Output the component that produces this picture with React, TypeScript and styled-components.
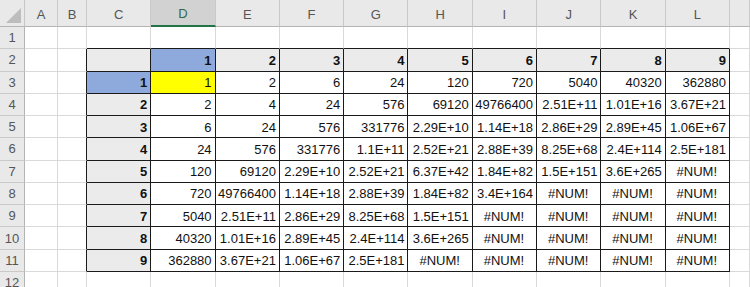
import React from 'react';
import styled, {createGlobalStyle} from 'styled-components';

const GlobalStyle = createGlobalStyle`
  html, body {
    margin: 0;
    padding: 0;
    background: #ffffff;
  }
`;

const columns = ['A', 'B', 'C', 'D', 'E', 'F', 'G', 'H', 'I', 'J', 'K', 'L', ''];
const rowCount = 12;

const N = '#NUM!';
const values: string[][] = [
    ['1', '2', '6', '24', '120', '720', '5040', '40320', '362880'],
    ['2', '4', '24', '576', '69120', '49766400', '2.51E+11', '1.01E+16', '3.67E+21'],
    ['6', '24', '576', '331776', '2.29E+10', '1.14E+18', '2.86E+29', '2.89E+45', '1.06E+67'],
    ['24', '576', '331776', '1.1E+11', '2.52E+21', '2.88E+39', '8.25E+68', '2.4E+114', '2.5E+181'],
    ['120', '69120', '2.29E+10', '2.52E+21', '6.37E+42', '1.84E+82', '1.5E+151', '3.6E+265', N],
    ['720', '49766400', '1.14E+18', '2.88E+39', '1.84E+82', '3.4E+164', N, N, N],
    ['5040', '2.51E+11', '2.86E+29', '8.25E+68', '1.5E+151', N, N, N, N],
    ['40320', '1.01E+16', '2.89E+45', '2.4E+114', '3.6E+265', N, N, N, N],
    ['362880', '3.67E+21', '1.06E+67', '2.5E+181', N, N, N, N, N],
];

// table spans C2:L11 -> column index 2..11, row 2..11
const inTable = (c: number, r: number) => c >= 2 && c <= 11 && r >= 2 && r <= 11;

type CellInfo = {text: string; fill: string; bold: boolean; center: boolean};

const cellInfo = (c: number, r: number): CellInfo => {
    const blank = {text: '', fill: '#ffffff', bold: false, center: false};
    if (!inTable(c, r)) return blank;
    const grey = '#ebebeb';
    const blue = '#8ea9db';
    if (r === 2) {
        if (c === 2) return {...blank, fill: grey};
        return {text: String(c - 2), fill: c === 3 ? blue : grey, bold: true, center: false};
    }
    if (c === 2) {
        return {text: String(r - 2), fill: r === 3 ? blue : grey, bold: true, center: false};
    }
    const text = values[r - 3][c - 3];
    const fill = c === 3 && r === 3 ? '#ffff00' : '#ffffff';
    return {text, fill, bold: false, center: text === N};
};

export default function App() {
    return (
        <>
            <GlobalStyle/>
            <Sheet>
                <Corner><Triangle/></Corner>
                {columns.map((col, i) => (
                    <ColHead key={col + i} $selected={col === 'D'}>{col}</ColHead>
                ))}
                {Array.from({length: rowCount}, (_, ri) => {
                    const r = ri + 1;
                    return (
                        <React.Fragment key={r}>
                            <RowHead>{r}</RowHead>
                            {columns.map((_, c) => {
                                const info = cellInfo(c, r);
                                const dark = inTable(c, r);
                                return (
                                    <Cell key={c}
                                          $fill={info.fill}
                                          $bold={info.bold}
                                          $center={info.center}
                                          $right={dark || inTable(c + 1, r) ? '#1a1a1a' : '#d9d9d9'}
                                          $bottom={dark || inTable(c, r + 1) ? '#1a1a1a' : '#d9d9d9'}>
                                        {info.text}
                                    </Cell>
                                );
                            })}
                        </React.Fragment>
                    );
                })}
            </Sheet>
        </>
    );
}

const Sheet = styled.div`
  display: grid;
  grid-template-columns: 25px 33px 29px repeat(10, 64.3px) 1fr;
  grid-template-rows: 27px repeat(12, 22.27px);
  width: 750px;
  height: 287px;
  overflow: hidden;
  background: #ffffff;
  font-family: "Liberation Sans", Arial, sans-serif;
  font-size: 13px;
  color: #111111;
`

const HeadBase = styled.div`
  box-sizing: border-box;
  display: flex;
  align-items: center;
  justify-content: center;
  background: #e9e9e9;
  color: #555555;
  font-size: 13px;
`

const Corner = styled(HeadBase)`
  position: relative;
  border-right: 1px solid #c6c6c6;
  border-bottom: 1px solid #b4b4b4;
`

const Triangle = styled.div`
  position: absolute;
  right: 3px;
  bottom: 3px;
  width: 0;
  height: 0;
  border-left: 15px solid transparent;
  border-bottom: 15px solid #bdbdbd;
`

const ColHead = styled(HeadBase)<{$selected: boolean}>`
  padding-top: 2px;
  border-right: 1px solid #c9c9c9;
  border-bottom: ${p => p.$selected ? '2px solid #217346' : '1px solid #b4b4b4'};
  background: ${p => p.$selected ? '#d2d2d2' : '#e9e9e9'};
  color: ${p => p.$selected ? '#2f6b45' : '#555555'};
`

const RowHead = styled(HeadBase)`
  border-right: 1px solid #b4b4b4;
  border-bottom: 1px solid #c9c9c9;
`

const Cell = styled.div<{ $fill: string; $bold: boolean; $center: boolean; $right: string; $bottom: string }>`
  box-sizing: border-box;
  display: flex;
  align-items: center;
  justify-content: ${p => p.$center ? 'center' : 'flex-end'};
  padding: 1px 3px 0 2px;
  overflow: hidden;
  white-space: nowrap;
  background: ${p => p.$fill};
  font-weight: ${p => p.$bold ? 700 : 400};
  border-right: 1px solid ${p => p.$right};
  border-bottom: 1px solid ${p => p.$bottom};
`
